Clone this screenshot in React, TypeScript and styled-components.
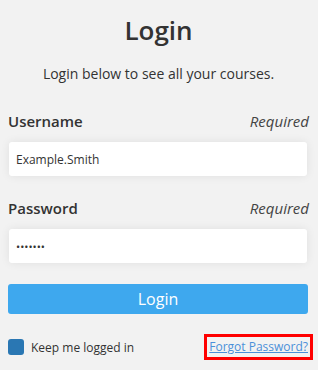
import React from "react";
import styled, { createGlobalStyle } from "styled-components";

const Global = createGlobalStyle`
  html, body { margin: 0; padding: 0; background: #f2f2f2; }
  body { font-family: "Open Sans", "Noto Sans", sans-serif; color: #333; }
`;

const Page = styled.div`
  width: 318px;
  height: 370px;
  box-sizing: border-box;
  padding: 0 9px 0 8px;
  display: flex;
  flex-direction: column;
`;

const Title = styled.h1`
  margin: 12px 0 0;
  font-size: 26px;
  font-weight: 600;
  line-height: 36px;
  text-align: center;
  color: #333;
`;

const Subtitle = styled.p`
  margin: 16px 0 0;
  font-size: 14px;
  line-height: 20px;
  text-align: center;
  color: #333;
`;

const Field = styled.div<{ $top: number }>`
  margin-top: ${(p) => p.$top}px;
  display: flex;
  flex-direction: column;
`;

const LabelRow = styled.div`
  display: flex;
  justify-content: space-between;
  align-items: baseline;
  font-size: 15px;
  line-height: 20px;
`;

const Label = styled.label`
  font-weight: 600;
  color: #333;
`;

const Required = styled.span`
  font-style: italic;
  color: #444;
`;

const Input = styled.input`
  margin: 11px 0 0 1px;
  box-sizing: border-box;
  height: 34px;
  width: 298px;
  border: none;
  border-radius: 3px;
  background: #fff;
  box-shadow: 0 0 10px rgba(0, 0, 0, 0.08);
  padding: 0 7px;
  font-family: "Open Sans", "Noto Sans", sans-serif;
  font-size: 12px;
  color: #333;
  outline: none;
  &[type="password"] {
    font-size: 11px;
    letter-spacing: 0;
  }
`;

const Button = styled.button`
  margin-top: 21px;
  height: 30px;
  width: 300px;
  border: none;
  border-radius: 3px;
  background: #3ea8ee;
  color: #fff;
  font-family: "Open Sans", "Noto Sans", sans-serif;
  font-size: 16px;
  line-height: 30px;
  padding: 0;
`;

const Footer = styled.div`
  margin-top: 20px;
  display: flex;
  align-items: center;
  justify-content: space-between;
  width: 305px;
`;

const Remember = styled.label`
  display: flex;
  align-items: center;
  gap: 7px;
  font-size: 12px;
  color: #333;
`;

const Box = styled.span`
  width: 16px;
  height: 16px;
  border-radius: 3px;
  background: #2a77b3;
`;

const ForgotWrap = styled.span`
  border: 3px solid #f00;
  padding: 3px 2px;
  display: inline-flex;
`;

const Forgot = styled.a`
  font-size: 12px;
  line-height: 14px;
  color: #4a90d9;
  text-decoration: underline;
`;

export default function App() {
  return (
    <>
      <Global />
      <Page>
        <Title>Login</Title>
        <Subtitle>Login below to see all your courses.</Subtitle>
        <Field $top={27}>
          <LabelRow>
            <Label>Username</Label>
            <Required>Required</Required>
          </LabelRow>
          <Input defaultValue="Example.Smith" />
        </Field>
        <Field $top={22}>
          <LabelRow>
            <Label>Password</Label>
            <Required>Required</Required>
          </LabelRow>
          <Input type="password" defaultValue="1234567" />
        </Field>
        <Button>Login</Button>
        <Footer>
          <Remember>
            <Box />
            Keep me logged in
          </Remember>
          <ForgotWrap>
            <Forgot href="#">Forgot Password?</Forgot>
          </ForgotWrap>
        </Footer>
      </Page>
    </>
  );
}
